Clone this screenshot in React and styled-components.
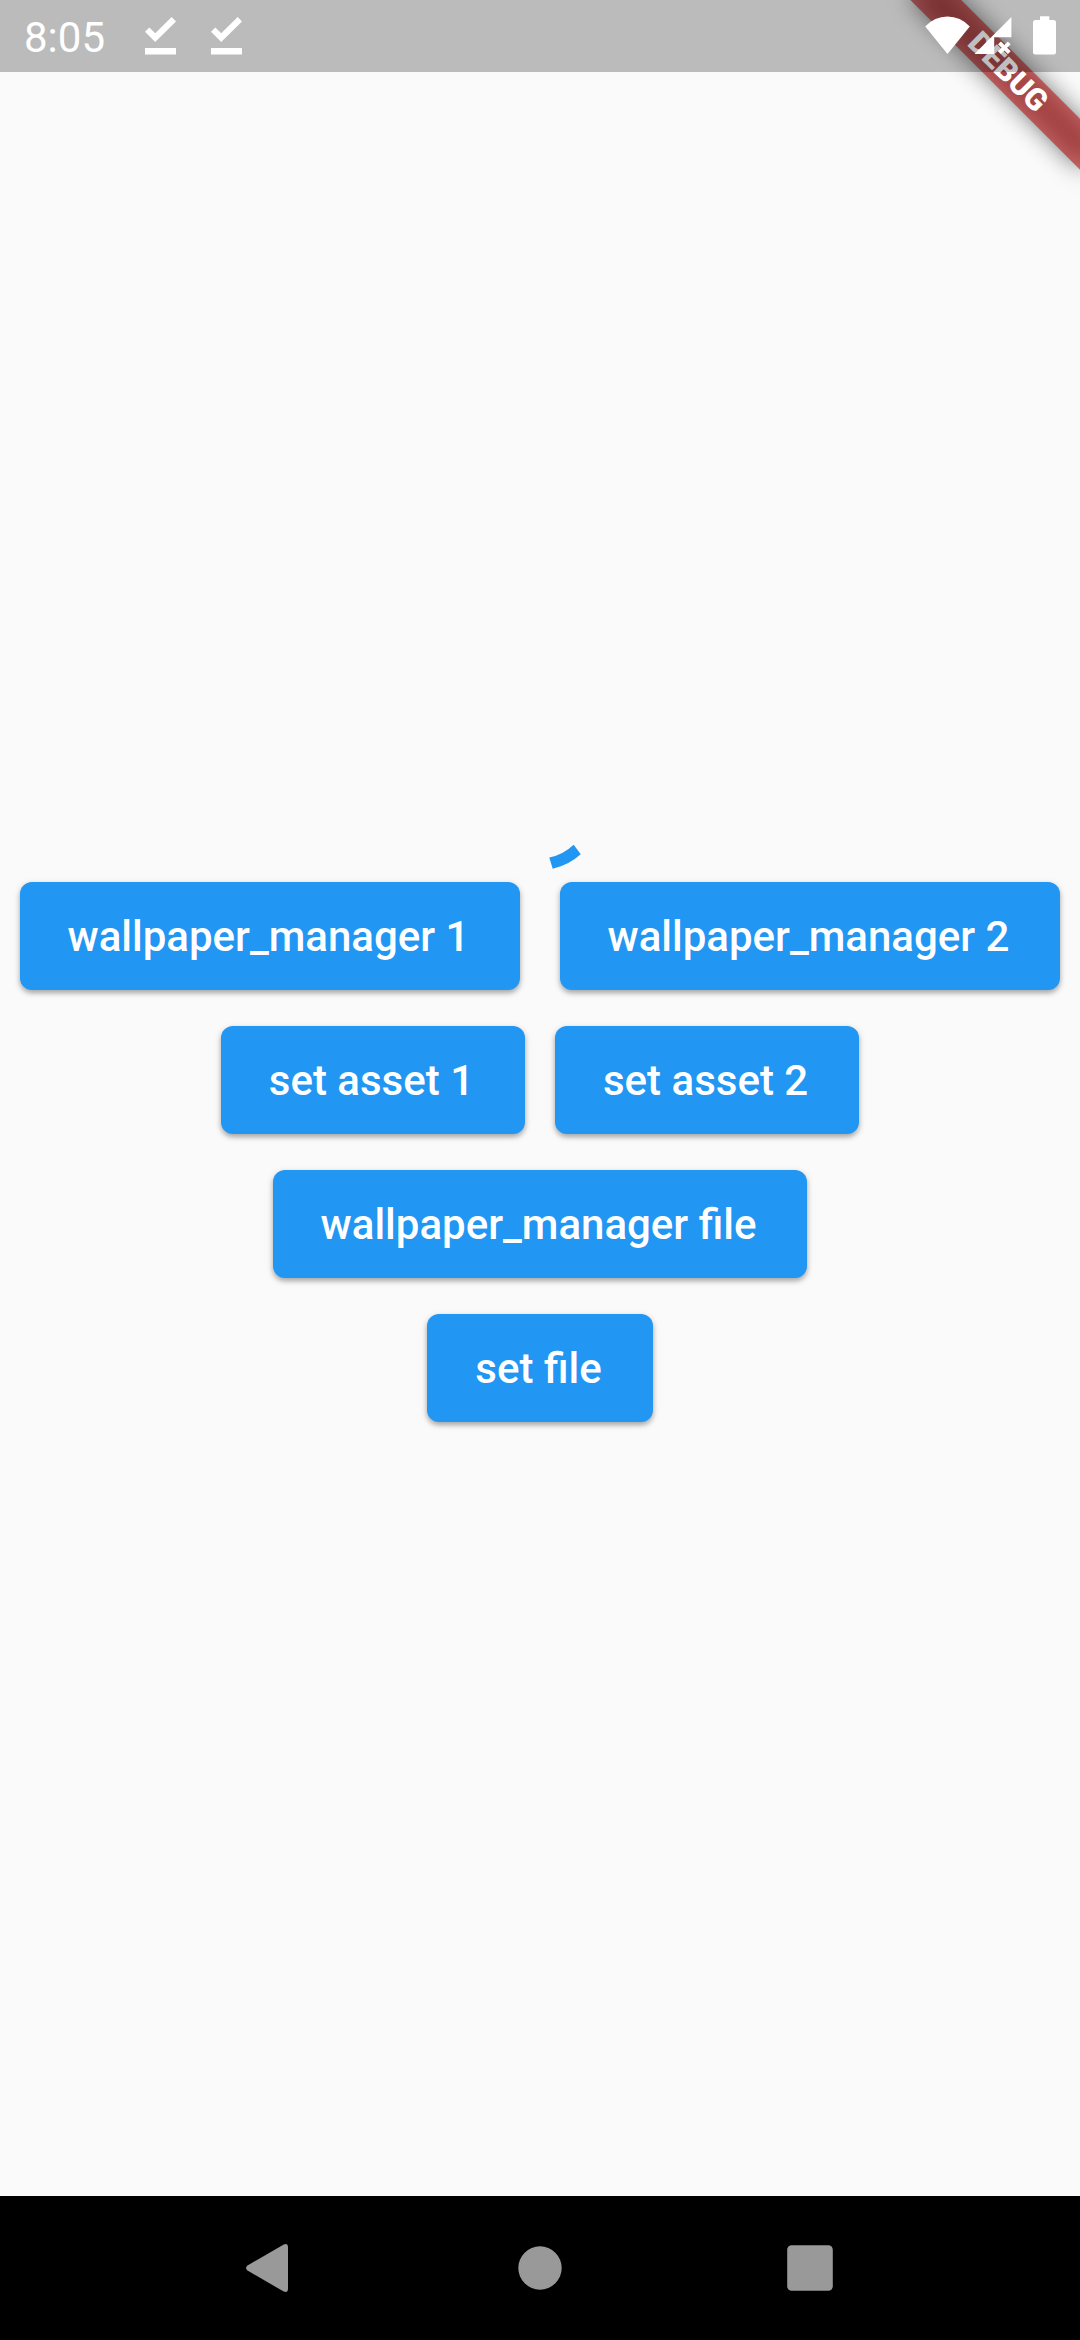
import React from "react";
import styled, { createGlobalStyle } from "styled-components";

const GlobalStyle = createGlobalStyle`
  html, body { margin: 0; background: #fafafa; }
  body { font-family: Roboto, "Noto Sans", sans-serif; }
`;

const Screen = styled.div`
  position: relative;
  display: flex;
  flex-direction: column;
  width: 1080px;
  height: 2340px;
  overflow: hidden;
  background: #fafafa;
`;

const Body = styled.main`
  flex: 1;
  display: flex;
  flex-direction: column;
  align-items: center;
  justify-content: center;
`;

const Spinner = styled.svg`
  display: block;
  width: 108px;
  height: 108px;
  overflow: visible;
  fill: #2196f3;
`;

const ButtonRow = styled.div`
  display: flex;
  align-items: center;
  justify-content: ${(p) => (p.$spread ? "space-around" : "center")};
  gap: ${(p) => (p.$spread ? 0 : 30)}px;
  width: 100%;
  height: 144px;
`;

const RaisedButton = styled.button`
  height: 108px;
  padding: 0 51px 0 48px;
  border: 0;
  border-radius: 12px;
  background: #2196f3;
  color: #fff;
  font: 500 42px/49px Roboto, "Noto Sans", sans-serif;
  white-space: nowrap;
  box-shadow: 0 3px 5px rgba(0, 0, 0, 0.28), 0 2px 9px rgba(0, 0, 0, 0.1);
`;

const StatusBar = styled.header`
  position: absolute;
  inset: 0 0 auto 0;
  display: flex;
  align-items: center;
  box-sizing: border-box;
  height: 72px;
  background: rgba(0, 0, 0, 0.25);
`;

const Clock = styled.span`
  box-sizing: border-box;
  width: 121px;
  padding: 3px 0 0 24px;
  color: #fff;
  font-size: 42px;
  line-height: 72px;
`;

const StatusIcon = styled.svg`
  display: block;
  flex: none;
  width: ${(p) => p.$w}px;
  height: 72px;
  fill: #fff;
`;

const Spacer = styled.div`
  flex: 1;
`;

const BannerShadow = styled.div`
  position: absolute;
  top: 84px;
  right: -120px;
  width: 240px;
  height: 36px;
  background: rgba(0, 0, 0, 0.5);
  filter: blur(11.9px);
  transform-origin: 120px -84px;
  transform: rotate(45deg);
`;

const Banner = styled.div`
  position: absolute;
  top: 84px;
  right: -120px;
  width: 240px;
  height: 36px;
  background: rgba(183, 28, 28, 0.627);
  color: #fff;
  font-size: 30.6px;
  font-weight: 900;
  line-height: 36px;
  text-align: center;
  transform-origin: 120px -84px;
  transform: rotate(45deg);
`;

const NavBar = styled.nav`
  display: flex;
  align-items: center;
  justify-content: center;
  height: 144px;
  background: #000;
`;

const NavKey = styled.svg`
  display: block;
  width: 270px;
  height: 144px;
  fill: #999;
`;

const DownloadDone = () => (
  <StatusIcon $w={66} viewBox="0 0 66 72">
    <path d="M24 48H55V54.5H24zM34.2 42L24 31.8L28.4 27.5L34.2 33.2L50.7 17L55 21.4z" />
  </StatusIcon>
);

export default function App() {
  return (
    <>
      <GlobalStyle />
      <Screen>
        <Body>
          <Spinner viewBox="0 0 108 108">
            <path d="M63.3 101.6L66.7 112.7A60 60 0 0 0 94.7 98.3L87.7 88.7A52 52 0 0 1 63.3 101.6z" />
          </Spinner>
          <ButtonRow $spread>
            <RaisedButton>wallpaper_manager 1</RaisedButton>
            <RaisedButton>wallpaper_manager 2</RaisedButton>
          </ButtonRow>
          <ButtonRow>
            <RaisedButton>set asset 1</RaisedButton>
            <RaisedButton>set asset 2</RaisedButton>
          </ButtonRow>
          <ButtonRow>
            <RaisedButton>wallpaper_manager file</RaisedButton>
          </ButtonRow>
          <ButtonRow>
            <RaisedButton>set file</RaisedButton>
          </ButtonRow>
        </Body>
        <NavBar>
          <NavKey viewBox="0 0 270 144">
            <path d="M153 51V93Q152.800 97 148.800 95.600L112.500 74.600Q109.500 72 112.500 69.400L148.800 48.400Q152.800 47 153 51z" />
          </NavKey>
          <NavKey viewBox="0 0 270 144">
            <circle cx="135" cy="72" r="21.7" />
          </NavKey>
          <NavKey viewBox="0 0 270 144">
            <rect x="112.2" y="49.2" width="45.6" height="45.6" rx="4.5" />
          </NavKey>
        </NavBar>
        <BannerShadow />
        <Banner>DEBUG</Banner>
        <StatusBar>
          <Clock>8:05</Clock>
          <DownloadDone />
          <DownloadDone />
          <Spacer />
          <StatusIcon $w={190} viewBox="0 0 190 72">
            <path d="M57.5 54L35.2 26.5Q44.500 16.500 57.500 16.500T79.800 26.500z" />
            <path d="M121.400 17V37.300H104.200V54H84.500z" />
            <path d="M109.500 42.800L119.300 52.600M119.300 42.800L109.500 52.600" stroke="#fff" strokeWidth="4" />
            <path d="M150 16.300H159.300V20H163.500Q166 20 166 22.500V52Q166 54.500 163.500 54.500H145.500Q143 54.500 143 52V22.500Q143 20 145.500 20H150z" />
          </StatusIcon>
        </StatusBar>
      </Screen>
    </>
  );
}
